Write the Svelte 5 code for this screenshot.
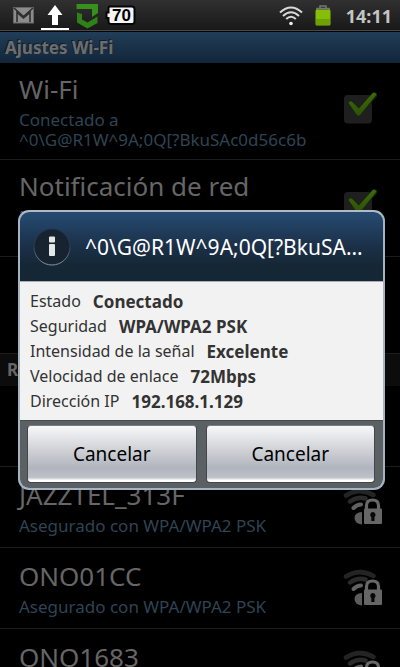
<script>
  const details = [
    ['Estado', 'Conectado'],
    ['Seguridad', 'WPA/WPA2 PSK'],
    ['Intensidad de la señal', 'Excelente'],
    ['Velocidad de enlace', '72Mbps'],
    ['Dirección IP', '192.168.1.129']
  ];
  const networks = ['ONO4F2A', 'JAZZTEL_313F', 'ONO01CC', 'ONO1683'];
  const actions = ['Cancelar', 'Cancelar'];
  let wifi = $state(true);
  let notify = $state(true);
</script>

{#snippet tick()}
  <svg class="tick" viewBox="0 0 34 32" aria-hidden="true">
    <defs>
      <linearGradient id="tickFill" x1="0" y1="0" x2="0" y2="1">
        <stop offset="0" stop-color="#3d6a0c" /><stop offset="1" stop-color="#2c5206" />
      </linearGradient>
    </defs>
    <rect x="1" y="3" width="28" height="28.500" rx="4" fill="#1f1f1f" />
    <path d="M8 11.500 15.200 20.500 31.500 3" fill="none" stroke="#172409" stroke-width="5.600" stroke-linecap="round" />
    <path d="M5.500 11Q6.500 8.500 9 9.800L15.800 16.500 29.500 1.200Q32 0 33.500 2.500L17.500 22.500Q15.500 25 13.500 22.500Z" fill="url(#tickFill)" />
  </svg>
{/snippet}

<div class="screen">
  <header class="status">
    <div class="group">
      <svg width="21" height="17" viewBox="0 0 21 17" aria-hidden="true">
        <rect x="0.500" y="0.500" width="20" height="15.500" fill="#8c8c8c" stroke="#666" />
        <path d="M1 1 10.500 9.500 20 1M4 15V5.500L10.500 11 17 5.500V15" fill="none" stroke="#2f2f2f" stroke-width="1.600" />
      </svg>
      <svg width="28" height="28" viewBox="0 0 28 28" aria-hidden="true">
        <path d="M14 3 21.500 13H17V23H11V13H6.500Z" fill="#fff" />
        <rect x="0" y="26" width="28" height="2" fill="#fff" />
      </svg>
      <svg width="23" height="26" viewBox="0 0 23 26" aria-hidden="true">
        <path d="M0.500 1H22V10L16 14V6H0.500Z" fill="#37901c" />
        <path d="M1 9.500 6 11V16.500L11.500 19.500 21.500 13.500V20L11.500 25.500 1 19.500Z" fill="#2f8218" />
      </svg>
      <svg class="level" width="32" height="21" viewBox="0 0 32 21" aria-hidden="true">
        <path d="M6 1.500H28Q30.500 1.500 30.500 4V16.500Q30.500 19 28 19H7Q4.500 19 4.500 16.500V13H2.500V7.500H4.500V3Q4.500 1.500 6 1.500Z" fill="#f4f4f4" stroke="#050505" stroke-width="2" />
        <text x="17.500" y="16" text-anchor="middle" class="charge">70</text>
      </svg>
    </div>
    <div class="group right">
      <svg width="24" height="20" viewBox="0 0 24 20" aria-hidden="true">
        <g fill="none" stroke="#d9d9d9" stroke-width="2">
          <path d="M1 6.500Q12-3.500 23 6.500M4 10Q12 2.500 20 10M7.200 13Q12 8.500 16.800 13" />
        </g>
        <circle cx="12" cy="17.500" r="1.800" fill="#eee" />
      </svg>
      <svg width="16" height="21" viewBox="0 0 16 21" aria-hidden="true">
        <path d="M5 3V1H11V3M2 5V3.500H14V5" fill="none" stroke="#777" stroke-width="1.500" />
        <rect x="0.500" y="4.500" width="15" height="16" rx="1.500" fill="#85bd07" />
        <path d="M1 14H15V19Q15 20 14 20H2Q1 20 1 19Z" fill="#6fa004" />
      </svg>
      <time>14:11</time>
    </div>
  </header>

  <h1>Ajustes Wi-Fi</h1>

  <main>
    <label class="row tall">
      <span class="copy">
        <span class="title">Wi-Fi</span>
        <span class="sub">Conectado a<br />^0\G@R1W^9A;0Q[?BkuSAc0d56c6b</span>
      </span>
      <input type="checkbox" bind:checked={wifi} />
      {@render tick()}
    </label>
    <label class="row tall">
      <span class="copy">
        <span class="title">Notificación de red</span>
        <span class="sub">Notificarme cuando haya disponible una red abierta</span>
      </span>
      <input type="checkbox" bind:checked={notify} />
      {@render tick()}
    </label>
    <div class="row tall">
      <span class="copy">
        <span class="title">Conexión WPS</span>
      </span>
    </div>
    <h2>Redes Wi-Fi</h2>
    {#each networks as name}
      <div class="row">
        <span class="copy">
          <span class="title">{name}</span>
          <span class="sub">Asegurado con WPA/WPA2 PSK</span>
        </span>
        <svg class="signal" viewBox="0 0 40 38" aria-hidden="true">
          <g fill="none" stroke-linecap="round">
            <path d="M3 8.500Q16.500 0 30.500 8" stroke="#242424" stroke-width="4.500" />
            <path d="M7 14.500Q15 9 22.500 11.500" stroke="#2a2a2a" stroke-width="4.500" />
            <path d="M10.500 21Q14 17.500 18 17.500" stroke="#626262" stroke-width="4" />
          </g>
          <path d="M19 25V37.500Q11.500 36.500 11.500 31T19 25Z" fill="#5c5c5c" />
          <path d="M23.500 23V18.500Q23.500 13 29.500 13T35.500 18.500V23" fill="none" stroke="#686868" stroke-width="3.200" />
          <rect x="21" y="21.500" width="18" height="15.500" rx="1" fill="#666" />
          <path d="M29.800 25A2.800 2.800 0 0 1 31.500 30V34H28.300V30A2.800 2.800 0 0 1 29.800 25Z" fill="#080808" />
        </svg>
      </div>
    {/each}
  </main>

  <div class="overlay">
    <div class="dialog" role="dialog" aria-labelledby="network-name">
      <div class="heading">
        <svg width="38" height="38" viewBox="0 0 38 38" aria-hidden="true">
          <defs>
            <linearGradient id="rim" x1="0" y1="0" x2="0" y2="1">
              <stop offset="0" stop-color="#1b3550" /><stop offset="0.500" stop-color="#2c4256" /><stop offset="1" stop-color="#8793a0" />
            </linearGradient>
          </defs>
          <circle cx="19" cy="19" r="18" fill="#17232e" stroke="url(#rim)" />
          <rect x="16" y="8.500" width="6" height="6" rx="1" fill="#e4e6e8" />
          <rect x="16" y="16" width="6" height="12" rx="1" fill="#e4e6e8" />
        </svg>
        <h3 id="network-name">^0\G@R1W^9A;0Q[?BkuSAc0d56c6b</h3>
      </div>
      <dl>
        {#each details as [label, value]}
          <div><dt>{label}</dt><dd>{value}</dd></div>
        {/each}
      </dl>
      <div class="actions">
        {#each actions as action}
          <button type="button">{action}</button>
        {/each}
      </div>
    </div>
  </div>
</div>

<style>
  :global(body) { margin: 0; background: #000; }
  .screen {
    position: relative;
    height: 100vh;
    overflow: hidden;
    background: #000;
    color: #666;
    font-family: "Noto Sans", "Open Sans", sans-serif;
  }
  h1, h2, h3, dl, dd { margin: 0; }
  .status {
    box-sizing: border-box;
    display: flex;
    align-items: center;
    justify-content: space-between;
    height: 31px;
    padding: 1px 8px 0 13px;
    border-bottom: 1px solid #484848;
    background: linear-gradient(#303030, #191919);
  }
  .group { display: flex; align-items: center; gap: 7px; }
  .group svg { flex: none; }
  .right { gap: 12px; }
  .level { margin-left: -2px; }
  .charge { font: bold 17px "Liberation Sans", Arial, sans-serif; fill: #000; }
  time { color: #c4c4c4; font-size: 18px; font-weight: 700; line-height: 30px; margin-left: 3px; }
  h1 {
    box-sizing: border-box;
    height: 32px;
    padding-left: 5px;
    border-top: 1px solid #050505;
    background: linear-gradient(#213d58, #12263a);
    color: #6d6d6d;
    font-size: 17px;
    line-height: 31px;
    text-shadow: -1px -1px 0 #141c24;
  }
  .row {
    box-sizing: border-box;
    position: relative;
    display: flex;
    align-items: center;
    justify-content: space-between;
    height: 81px;
    padding: 0 17px 0 19px;
    border-bottom: 1px solid #1c1c1c;
  }
  .row.tall { height: 97px; padding-right: 23px; }
  .copy { display: flex; flex-direction: column; gap: 3px; min-width: 0; }
  .title { font-size: 26px; line-height: 35px; }
  .sub { color: #2f4454; font-size: 17px; line-height: 20px; }
  input { position: absolute; right: 27px; width: 28px; height: 28px; margin: 0; opacity: 0; }
  .tick { flex: none; width: 34px; height: 32px; margin-bottom: 6px; }
  .signal { flex: none; width: 40px; height: 38px; margin-bottom: 2px; }
  h2 {
    height: 32px;
    padding-left: 7px;
    background: #0c0c0c;
    font-size: 17px;
    line-height: 31px;
  }
  .overlay {
    position: absolute;
    inset: 32px 0 0;
    display: flex;
    align-items: center;
    padding: 0 15px 0 18px;
  }
  .dialog {
    flex: 1;
    min-width: 0;
    overflow: hidden;
    border: 2px solid #a3b4c5;
    border-top-color: #b2bac6;
    border-radius: 11px;
    background: #f2f2f2;
    color: #333;
  }
  .heading {
    display: flex;
    align-items: center;
    gap: 14px;
    height: 68px;
    padding: 1px 13px 0;
    border-bottom: 1px solid #a9afb5;
    background: linear-gradient(#264b72, #1b3048 50%, #152634 80%);
  }
  .heading svg { flex: none; }
  h3 {
    overflow: hidden;
    color: #fff;
    font-size: 21px;
    font-weight: 400;
    line-height: 32px;
    white-space: nowrap;
    text-overflow: ellipsis;
  }
  dl { padding: 7px 10px 6px; line-height: 25px; }
  dl div { display: flex; gap: 12px; }
  dt { font-size: 16px; }
  dd { font-size: 17px; font-weight: 700; }
  .actions {
    display: flex;
    gap: 9px;
    padding: 4px 8px 5px 7px;
    border-top: 1px solid #484c4f;
    background: #5b6063;
  }
  button {
    flex: 1;
    height: 58px;
    padding: 0;
    border: 1px solid #43474b;
    border-top-color: #777d82;
    border-radius: 4px;
    background: linear-gradient(#f8f8fa, #d2d4d8 40%, #b0b4bd 75%, #bfc2c9 92%, #fff 97%);
    color: #000;
    font-family: inherit;
    font-size: 19px;
  }
</style>
